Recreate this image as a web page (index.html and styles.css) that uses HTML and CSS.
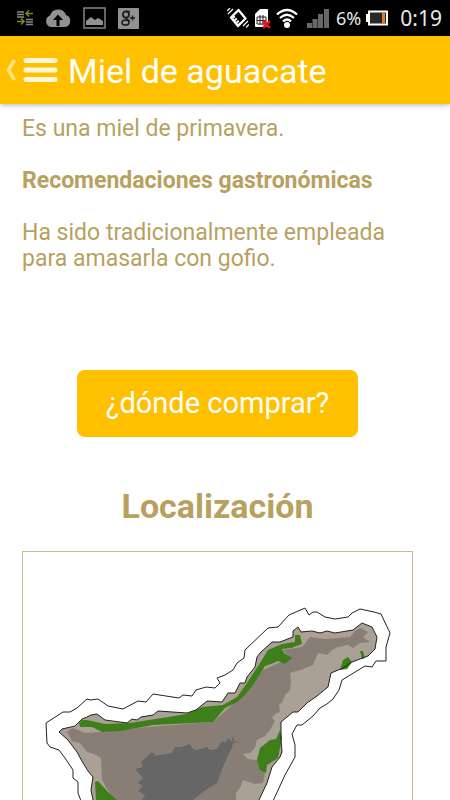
FILE: index.html
```
<!DOCTYPE html>
<html lang="es">
<head>
    <meta charset="utf-8">
    <meta name="viewport" content="width=device-width, initial-scale=1">
    <title>Miel de aguacate</title>
    <link rel="stylesheet" href="styles.css">
</head>
<body>
    <div class="status-bar">
        <div class="notifications">
            <svg width="16" height="16" viewBox="0 0 16 16" fill="none">
                <path d="M0 2h7M0 4.5h7M0 7h7M9 9.5h7M9 12h7M9 14.500h7" stroke="#888" stroke-width="1.500"/>
                <path d="M16 3.500H9M12 .5l-3 3 3 3M0 11.500h7M4 8.500l3 3-3 3" stroke="#6d9414" stroke-width="1.500"/>
            </svg>
            <svg width="26" height="20" viewBox="0 0 26 20">
                <path d="M6 19a6 6 0 0 1-1-11.500A8.500 8.500 0 0 1 21 7a6.200 6.200 0 0 1-1 12z" fill="#929092"/>
                <path d="M11.500 18v-6H8l5-5.500 5 5.500h-3.500v6z" fill="#000"/>
            </svg>
            <svg width="23" height="22" viewBox="0 0 23 22">
                <path d="M1 1h21v20H1z" fill="none" stroke="#858585" stroke-width="1.500"/>
                <path d="M3 18v-4l5-4 4 3 3-2 5 3v4z" fill="#929092"/>
            </svg>
            <svg width="21" height="21" viewBox="0 0 21 21" fill="none" stroke="#1c1c1c">
                <rect width="21" height="21" rx="1" fill="#929092" stroke="none"/>
                <ellipse cx="8" cy="6.500" rx="3" ry="3.200" stroke-width="1.800"/>
                <path d="M8 3.500h4M8 9.500c-1 1.500 3 2 3.500 4" stroke-width="1.500"/>
                <ellipse cx="7.500" cy="14.500" rx="3.500" ry="2.600" stroke-width="1.500"/>
                <path d="M14.500 7.500v5M12 10h5" stroke-width="1.300"/>
            </svg>
        </div>
        <div class="system">
            <svg width="22" height="20" viewBox="0 0 22 20" fill="none" stroke="#fff">
                <path d="M11.500 2L4 9.500l7 8.500 7.500-7.500z" stroke-width="2.300" stroke-linejoin="round"/>
                <path d="M6 8.500l6.500 7.500" stroke-width="3" stroke-dasharray="2 1"/>
                <path d="M1 6l5-5M0 3l3-3M16 18l5-5M19 19.500l3-3" stroke-width="1.200"/>
            </svg>
            <svg width="17" height="21" viewBox="0 0 17 21">
                <path d="M1 6l5-5h7q1 0 1 1v17H2q-1 0-1-1z" fill="#fff"/>
                <path d="M3 9h9v7H3zM6 7v10M9 7v10M3 12.500h9" fill="none" stroke="#222"/>
                <path d="M9 13l7 7M16 13l-7 7" stroke="#e8121c" stroke-width="2.500"/>
            </svg>
            <svg width="22" height="21" viewBox="0 0 22 21" fill="none" stroke="#fff" stroke-width="2.300">
                <path d="M1 6.500q10-9 20 0M4 10q7-6.500 14 0M7 13.500q4-4 8 0"/>
                <circle cx="11" cy="17" r="3" fill="#fff" stroke="none"/>
            </svg>
            <svg class="signal" width="22" height="19" viewBox="0 0 22 19" fill="#686868">
                <path d="M0 14h5v5H0zM5.500 10h5v9h-5zM11 5h5v14h-5zM17 0h5v19h-5z"/>
            </svg>
            <span class="percent">6%</span>
            <svg width="23" height="17" viewBox="0 0 23 17">
                <path d="M0 4h3v8H0z" fill="#fff"/>
                <rect x="3" y="1.500" width="18" height="13" fill="#292929" stroke="#fff" stroke-width="2"/>
                <path d="M16 3h3v10h-3z" fill="#e97620"/>
            </svg>
            <span class="clock">0:19</span>
        </div>
    </div>

    <header class="header">
        <button type="button" class="menu-button" aria-label="Menú">
            <svg width="53" height="26" viewBox="0 0 53 26" fill="none">
                <path d="M9.500 2L3.500 12l6 10" stroke="#ffe28a" stroke-width="3.500"/>
                <path d="M21 2.500h29M21 12h29M21 21.500h29" stroke="#fff7dc" stroke-width="5" stroke-linecap="round"/>
            </svg>
        </button>
        <h1>Miel de aguacate</h1>
    </header>

    <main class="content">
        <p>Es una miel de primavera.</p>
        <h2>Recomendaciones gastronómicas</h2>
        <p>Ha sido tradicionalmente empleada para amasarla con gofio.</p>

        <button type="button" class="buy-button">¿dónde comprar?</button>

        <h3>Localización</h3>
        <div class="map">
            <svg viewBox="23 552 389 248" role="img" aria-label="Mapa de Tenerife">
                <!-- island -->
                <path class="land" d="M93 805V800L91 790L93 777L88 771L83 763L77 752L68 740L59 732L62 729L75 726L82 719L87 717L91 715L97 714L105 720L127 723L132 719L137 720L141 717L153 715L158 711L187 713L196 710L207 701L222 702L228 693L235 693L240 683L245 683L247 677L255 667L257 657L261 652L272 642L280 642L293 637L293 631L298 627L301 632L312 631L320 633L327 631L335 633L353 630L362 623L372 627L377 637L375 649L368 656L352 662L343 668L331 673L328 687L317 696L307 703L298 712L293 712L281 722V740L282 752L280 757L272 767L267 783L259 800V805z"/>
                <path class="hills" d="M67 732L73 728L85 733L103 732L147 727L213 722L230 707L263 670L290 658L283 650L302 647L310 637L325 639L350 637L355 631L360 628L368 632L363 637L370 642L360 643L353 648L348 645L338 647L332 650L327 655L318 653L313 665L303 669L290 673L291 681L290 690L285 695L282 703L279 704L280 712L275 714L272 718L275 721L270 730L265 736L257 740L255 748L250 753L243 754L248 759L257 760L265 773L263 783L255 784L243 780L240 788L236 793V800H115L107 789L102 780L101 758L94 754L87 752L80 743L72 741z"/>
                <path class="peak" d="M135 769L143 767L141 762L152 752L156 756L160 755L172 753L175 747L181 747L190 744L193 749L197 750L207 747L210 750L217 749L222 741L225 743L229 738L231 742L233 736L234 741L239 742L233 743L232 748L228 755L223 767L217 783L210 787L203 792L193 800H142L145 795L138 791L143 786L138 783L143 778z"/>
                <!-- coast where the honey is produced -->
                <path class="zone" d="M79 723L82 720L87 720L105 724L130 723L187 714L202 707L223 705L237 697L247 683L260 663L268 650L282 644L295 642L295 635L300 635L302 644L291 648L282 649L284 653L292 658L285 664L278 661L271 664L265 666L253 685L245 695L237 702L225 708L213 722L153 725L120 731L102 732L92 727L80 727z"/>
                <path class="zone" d="M95 782L98 781L108 792L117 800H96zM280 730L282 738L280 748L278 758L267 765L266 773L260 770L257 760L260 748L270 740L276 739zM340 670L343 660L348 657L352 662L347 669zM360 651L363 651L365 658L362 659z"/>
                <path class="coast" d="M93 805V800L91 790L93 777L88 771L83 763L77 752L68 740L59 732L62 729L75 726L82 719L87 717L91 715L97 714L105 720L127 723L132 719L137 720L141 717L153 715L158 711L187 713L196 710L207 701L222 702L228 693L235 693L240 683L245 683L247 677L255 667L257 657L261 652L272 642L280 642L293 637L293 631L298 627L301 632L312 631L320 633L327 631L335 633L353 630L362 623L372 627L377 637L375 649L368 656L352 662L343 668L331 673L328 687L317 696L307 703L298 712L293 712L281 722V740L282 752L280 757L272 767L267 783L259 800V805"/>
                <path class="coast" d="M81 801L78 793V782L73 778V770L65 758L59 750L50 747L47 743L46 723L63 712H70L77 708L87 699L90 700L98 699L108 706L123 709L138 701L146 702L153 694L179 698L183 695L192 696L196 690L206 687L215 688L220 683L217 678L225 675L233 670L237 663L244 658L245 650L268 628L278 627L289 615L305 608L309 615L313 612L317 612L325 617L335 619L348 617L352 613L360 609L374 612L381 614L390 633L386 647V661H376L372 667L365 666L342 680L339 690L333 699L327 704L320 708L313 716L302 725H297L292 734L295 745V757L285 775L273 801"/>
            </svg>
        </div>
    </main>
</body>
</html>
```
FILE: styles.css
```
* { box-sizing: border-box; }
body { margin: 0; background: #fff; color: #b8a15f; font-family: Roboto, sans-serif; font-size: 23px; line-height: 26px; }
h1, h2, h3, p { margin: 0; }
svg { display: block; flex-shrink: 0; }
button { border: none; font-family: inherit; cursor: pointer; }

.status-bar { display: flex; justify-content: space-between; align-items: center; height: 36px; padding: 0 8px 0 17px; background: #000; color: #e8e8e8; }
.notifications { display: flex; align-items: center; gap: 12px; }
.system { display: flex; align-items: center; gap: 5px; }
.signal { margin: 0 2px 0 4px; }
.percent { font-family: "Noto Sans", sans-serif; font-size: 18px; }
.clock { margin-left: 6px; font-family: "Noto Sans", sans-serif; font-size: 21px; }

.header { display: flex; align-items: center; gap: 10px; height: 68px; padding: 2px 0 0 5px; background: #ffc000; color: #fff; box-shadow: 0 1px 5px rgba(0, 0, 0, 0.3); }
.header h1 { font-size: 34px; font-weight: 400; line-height: 42px; }
.menu-button { padding: 0; background: none; }

.content { padding: 12px 37px 0 22px; }
.content h2 { margin: 26px 0; font-size: 23px; font-weight: 700; line-height: 26px; }
.buy-button { display: block; margin: 98px auto 48px; padding: 16px 29px; border-radius: 8px; background: #ffc000; color: #fff; font-size: 29px; line-height: 35px; }
.content h3 { margin-bottom: 24px; font-size: 34px; font-weight: 700; line-height: 42px; text-align: center; }

.map { border: 1px solid #c9b98d; border-bottom: none; }
.map svg { width: 100%; }
.land { fill: #aaa096; }
.hills { fill: #897e76; }
.peak { fill: #666; }
.zone { fill: #3f7f1a; }
.coast { fill: none; stroke: #222; stroke-width: 1; }
```
